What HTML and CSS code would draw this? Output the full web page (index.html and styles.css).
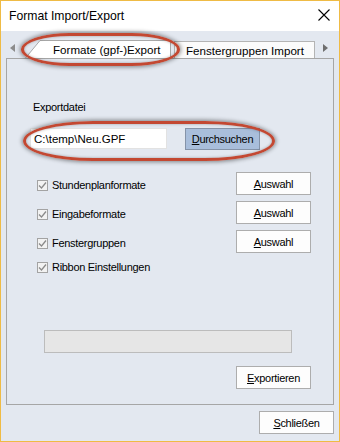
FILE: index.html
```html
<!DOCTYPE html>
<html lang="de">
<head>
    <meta charset="UTF-8">
    <title>Format Import/Export</title>
    <link rel="stylesheet" href="styles.css">
</head>
<body>
    <div class="window">
        <div class="titlebar">
            <span class="title">Format Import/Export</span>
            <svg class="close" width="12" height="12" viewBox="0 0 12 12">
                <path d="M0.5 0.5 L11.5 11.5 M11.5 0.5 L0.5 11.5" stroke="#000" stroke-width="1.1" fill="none"/>
            </svg>
        </div>

        <div class="client">
            <!-- tab strip -->
            <div class="tabstrip">
                <span class="arrow arrow-left"></span>
                <div class="tab tab-active">
                    <svg class="tab-shape" viewBox="0 0 146 18" preserveAspectRatio="none">
                        <path d="M0.5 18 L15 0.5 L145.5 0.5 L145.5 18" fill="#fff" stroke="#a8a8a8" stroke-width="1"/>
                    </svg>
                    <span class="tab-label">Formate (gpf-)Export</span>
                </div>
                <div class="tab tab-other">Fenstergruppen Import</div>
                <span class="arrow arrow-right"></span>
            </div>

            <div class="panel">
                <div class="field-label">Exportdatei</div>
                <div class="file-row">
                    <div class="textbox">C:\temp\Neu.GPF</div>
                    <button class="btn btn-hot"><u>D</u>urchsuchen</button>
                </div>

                <div class="options">
                    <div class="option">
                        <label class="check"><span class="box"><svg width="9" height="9" viewBox="0 0 9 9"><path d="M1 4.5 L3.5 7 L8 1.5" stroke="#8a8a8a" stroke-width="1.3" fill="none"/></svg></span>Stundenplanformate</label>
                        <button class="btn"><u>A</u>uswahl</button>
                    </div>
                    <div class="option">
                        <label class="check"><span class="box"><svg width="9" height="9" viewBox="0 0 9 9"><path d="M1 4.5 L3.5 7 L8 1.5" stroke="#8a8a8a" stroke-width="1.3" fill="none"/></svg></span>Eingabeformate</label>
                        <button class="btn"><u>A</u>uswahl</button>
                    </div>
                    <div class="option">
                        <label class="check"><span class="box"><svg width="9" height="9" viewBox="0 0 9 9"><path d="M1 4.5 L3.5 7 L8 1.5" stroke="#8a8a8a" stroke-width="1.3" fill="none"/></svg></span>Fenstergruppen</label>
                        <button class="btn"><u>A</u>uswahl</button>
                    </div>
                    <div class="option option-last">
                        <label class="check"><span class="box"><svg width="9" height="9" viewBox="0 0 9 9"><path d="M1 4.5 L3.5 7 L8 1.5" stroke="#8a8a8a" stroke-width="1.3" fill="none"/></svg></span>Ribbon Einstellungen</label>
                    </div>
                </div>

                <div class="progress"></div>

                <div class="panel-actions">
                    <button class="btn"><u>E</u>xportieren</button>
                </div>
            </div>

            <div class="footer">
                <button class="btn"><u>S</u>chließen</button>
            </div>
        </div>

        <!-- red markers drawn over the screenshot -->
        <div class="marker marker-tab"></div>
        <div class="marker marker-file"></div>
    </div>
</body>
</html>
```

FILE: styles.css
```css
* {
    box-sizing: border-box;
}

body {
    margin: 0;
    padding: 0;
    background: #ffffff;
    font-family: "Liberation Sans", Arial, sans-serif;
    font-size: 11px;
    letter-spacing: -0.3px;
    color: #000;
}

.window {
    position: relative;
    width: 340px;
    height: 442px;
    border: 1px solid #efbb45;
    display: flex;
    flex-direction: column;
    background: #e3e8f0;
}

.titlebar {
    height: 30px;
    background: #ffffff;
    display: flex;
    align-items: center;
    justify-content: space-between;
    padding: 0 9px 0 8px;
    flex-shrink: 0;
}

.title {
    font-size: 12.2px;
    letter-spacing: 0;
    margin-top: -1px;
}

.close {
    margin-top: -3px;
}

.client {
    flex: 1;
    display: flex;
    flex-direction: column;
}

/* tabs */
.tabstrip {
    height: 27px;
    display: flex;
    align-items: flex-end;
    padding-left: 9px;
    position: relative;
}

.arrow {
    width: 0;
    height: 0;
    border-top: 4px solid transparent;
    border-bottom: 4px solid transparent;
    align-self: center;
    margin-top: 6px;
}

.arrow-left {
    border-right: 5px solid #8c8c8c;
    margin-right: 10px;
}

.arrow-right {
    border-left: 5px solid #6e6e6e;
    margin-left: 8px;
}

.tab {
    font-size: 11.6px;
    letter-spacing: 0;
    white-space: nowrap;
    display: flex;
    align-items: center;
    padding-top: 1px;
}

.tab-active {
    position: relative;
    width: 146px;
    height: 18px;
    padding-left: 28px;
    z-index: 1;
}

.tab-shape {
    position: absolute;
    left: 0;
    top: 0;
    width: 146px;
    height: 18px;
}

.tab-label {
    position: relative;
}

.tab-other {
    height: 17px;
    width: 141px;
    margin-left: 3px;
    background: #fbfbfb;
    border: 1px solid #b4b4b4;
    border-bottom: none;
    padding-left: 11px;
}

/* panel */
.panel {
    height: 347px;
    margin: 0 5px;
    border: 1px solid #a6a6a6;
    padding: 0 22px 0 23px;
    display: flex;
    flex-direction: column;
}

.field-label {
    margin-top: 42px;
    padding-left: 3px;
    line-height: 13px;
}

.file-row {
    margin-top: 14px;
    display: flex;
    align-items: flex-start;
}

.textbox {
    width: 137px;
    height: 21px;
    background: #fff;
    border: 1px solid #e2e2e2;
    padding: 4px 0 0 3px;
    font-size: 11.5px;
    letter-spacing: 0;
}

.btn {
    width: 75px;
    height: 23px;
    background: #fdfdfd;
    border: 1px solid #adadad;
    font-family: "Liberation Sans", Arial, sans-serif;
    font-size: 11px;
    letter-spacing: -0.3px;
    padding: 0;
    color: #000;
}

.btn-hot {
    margin-left: 18px;
    height: 22px;
    background: #a9bedb;
    border-color: #8593a8;
}

.options {
    margin-top: 22px;
    display: flex;
    flex-direction: column;
}

.option {
    height: 29px;
    display: flex;
    justify-content: space-between;
    align-items: flex-start;
}

.option-last {
    height: 20px;
}

.check {
    display: flex;
    align-items: center;
    margin-top: 7px;
    padding-left: 7px;
}

.option-last .check {
    margin-top: 2px;
}

.box {
    width: 11px;
    height: 11px;
    border: 1px solid #a3a3a3;
    background: #f2f2f2;
    margin-right: 4px;
    display: flex;
    align-items: center;
    justify-content: center;
}

.progress {
    margin: 51px 0 0 14px;
    width: 248px;
    height: 23px;
    background: #e6e6e6;
    border: 1px solid #bcbcbc;
}

.panel-actions {
    margin-top: 13px;
    display: flex;
    justify-content: flex-end;
}

.footer {
    display: flex;
    justify-content: flex-end;
    padding: 6px 5px 0 0;
}

/* annotation ellipses */
.marker {
    position: absolute;
    border: 3px solid #c34832;
    box-shadow: 0 0 4px 1px rgba(0, 0, 0, 0.45), inset 0 0 3px rgba(0, 0, 0, 0.3);
    pointer-events: none;
    z-index: 5;
}

.marker-tab {
    left: 20px;
    top: 32px;
    width: 159px;
    height: 33px;
    border-radius: 50px / 17px;
}

.marker-file {
    left: 22px;
    top: 120px;
    width: 252px;
    height: 40px;
    border-radius: 70px / 20px;
}
```
